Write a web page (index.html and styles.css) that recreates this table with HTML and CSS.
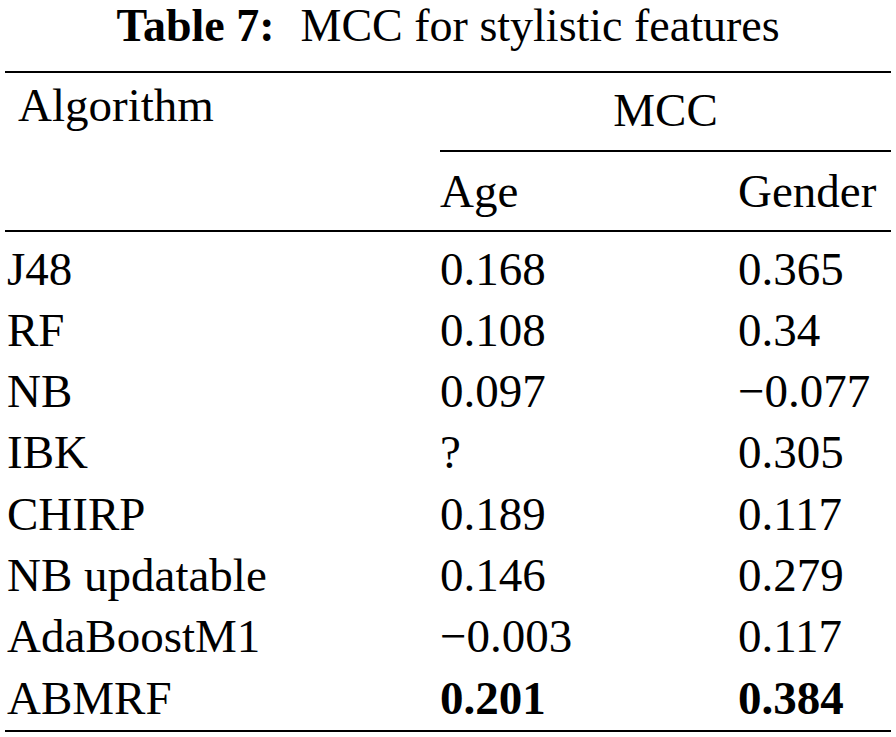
FILE: index.html
```html
<!DOCTYPE html>
<html lang="en">
<head>
<meta charset="utf-8">
<title>Table 7: MCC for stylistic features</title>
<link rel="stylesheet" href="styles.css">
</head>
<body>
<div class="title"><span class="label">Table 7:</span>MCC for stylistic features</div>
<table class="mcc">
  <colgroup>
    <col class="c-alg">
    <col class="c-age">
    <col class="c-gen">
  </colgroup>
  <thead>
    <tr>
      <th class="h-alg" rowspan="2">Algorithm</th>
      <th class="h-mcc" colspan="2">MCC</th>
    </tr>
    <tr>
      <th class="h-sub">Age</th>
      <th class="h-sub">Gender</th>
    </tr>
  </thead>
  <tbody>
    <tr class="first"><td class="name">J48</td><td>0.168</td><td>0.365</td></tr>
    <tr><td class="name">RF</td><td>0.108</td><td>0.34</td></tr>
    <tr><td class="name">NB</td><td>0.097</td><td>&minus;0.077</td></tr>
    <tr><td class="name">IBK</td><td>?</td><td>0.305</td></tr>
    <tr><td class="name">CHIRP</td><td>0.189</td><td>0.117</td></tr>
    <tr><td class="name">NB updatable</td><td>0.146</td><td>0.279</td></tr>
    <tr><td class="name">AdaBoostM1</td><td>&minus;0.003</td><td>0.117</td></tr>
    <tr class="last"><td class="name">ABMRF</td><td class="best">0.201</td><td class="best">0.384</td></tr>
  </tbody>
</table>
</body>
</html>
```

FILE: styles.css
```css
html, body {
  margin: 0;
  padding: 0;
  background: #ffffff;
  color: #000000;
  font-family: "Liberation Serif", "Times New Roman", serif;
}

.title {
  font-size: 46px;
  line-height: 44px;
  padding-top: 4px;
  text-align: center;
  margin: 0 0 23px 0;
  white-space: nowrap;
}

.title .label {
  font-weight: bold;
  margin-right: 26px;
}

.mcc {
  margin-left: 5px;
  width: 886px;
  table-layout: fixed;
  border-collapse: separate;
  border-spacing: 0;
  font-size: 47px;
  line-height: 52px;
}

.c-alg { width: 435px; }
.c-age { width: 298px; }
.c-gen { width: 153px; }

.mcc th {
  font-weight: normal;
  text-align: left;
  padding: 0;
  white-space: nowrap;
}

.h-alg {
  vertical-align: top;
  border-top: 2px solid #000;
  border-bottom: 2px solid #000;
  padding: 6px 0 0 13px !important;
}

.h-mcc {
  text-align: center !important;
  vertical-align: top;
  border-top: 2px solid #000;
  border-bottom: 2px solid #000;
  padding: 11px 0 14px 0 !important;
}

.h-sub {
  vertical-align: top;
  border-bottom: 2px solid #000;
  padding: 13px 0 13px 0 !important;
}

.mcc td {
  padding: 0;
  line-height: 61.3px;
  white-space: nowrap;
  vertical-align: top;
}

.mcc td.name {
  padding-left: 2px;
}

.mcc tr.first td {
  padding-top: 6.5px;
}

.mcc tr.last td {
  padding-bottom: 1px;
  border-bottom: 2px solid #000;
}

.mcc td.best {
  font-weight: bold;
}
```
